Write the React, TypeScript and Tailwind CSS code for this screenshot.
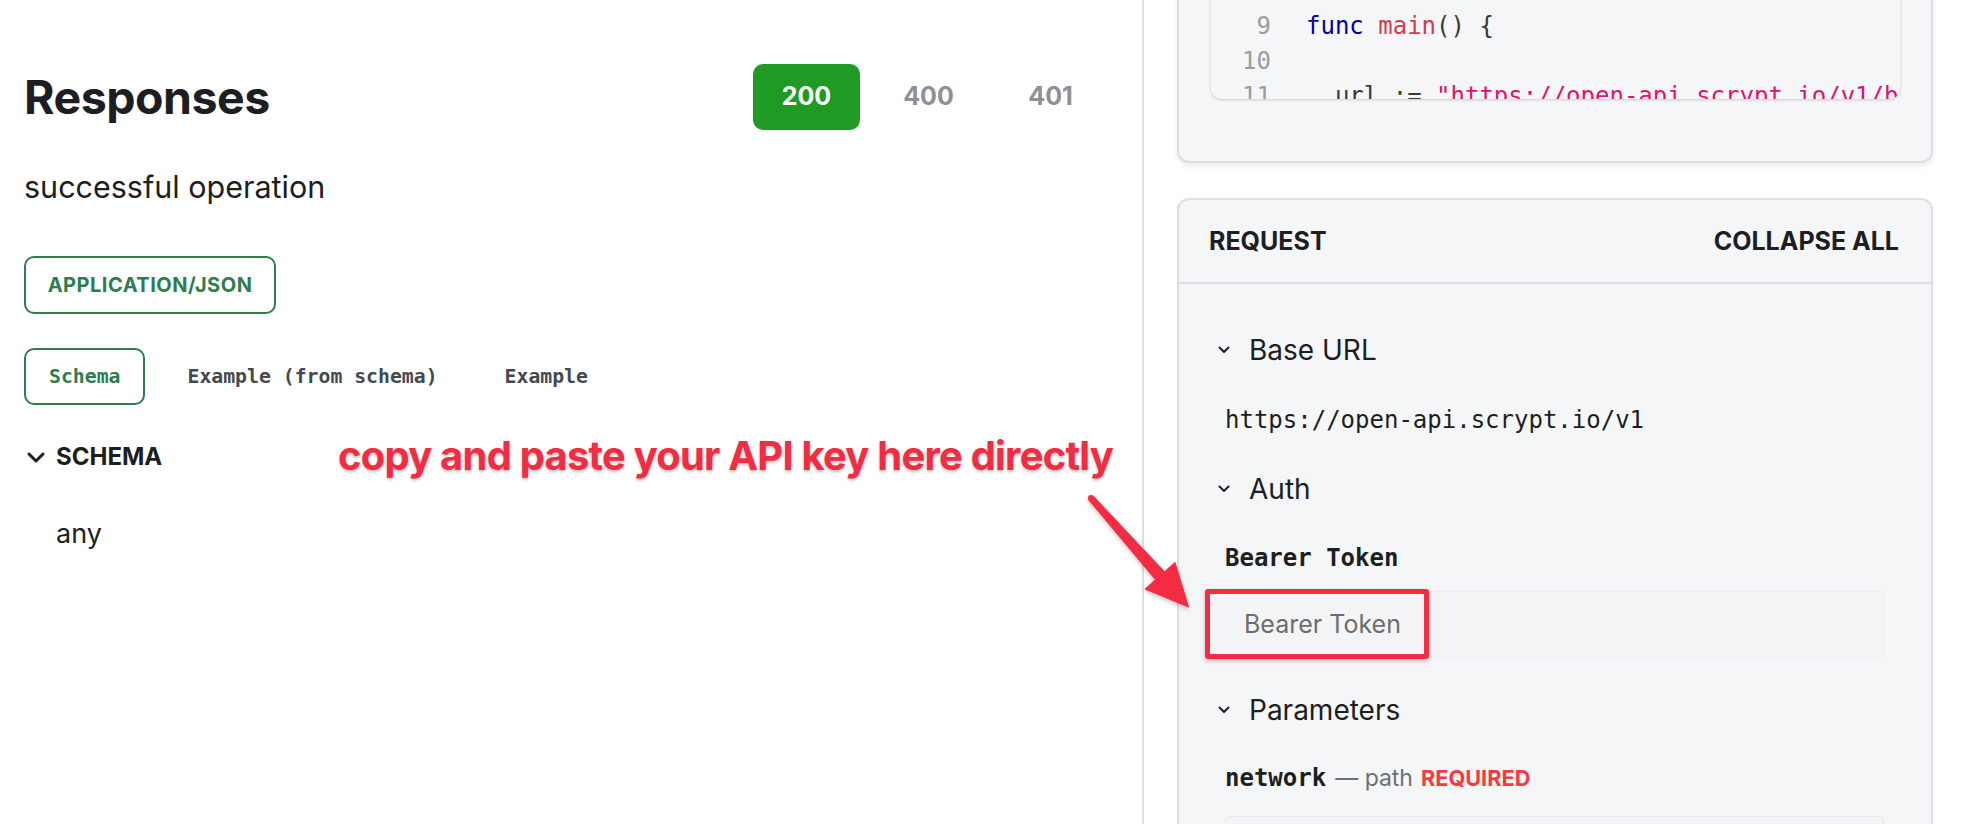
import React from "react";

function Chevron({ className }: { className?: string }) {
  return (
    <svg
      viewBox="0 0 12 8"
      className={className}
      fill="none"
      stroke="currentColor"
      strokeWidth={2}
      strokeLinecap="round"
      strokeLinejoin="round"
    >
      <polyline points="1.5,1.5 6,6 10.5,1.5" />
    </svg>
  );
}

const codeLines: { n: number; parts: [string, string][] }[] = [
  { n: 1, parts: [["#00009f", "package"], ["#393a34", " main"]] },
  { n: 2, parts: [] },
  { n: 3, parts: [["#00009f", "import"], ["#393a34", " ("]] },
  { n: 4, parts: [["#e3116c", '  "fmt"']] },
  { n: 5, parts: [["#e3116c", '  "net/http"']] },
  { n: 6, parts: [["#e3116c", '  "io/ioutil"']] },
  { n: 7, parts: [["#393a34", ")"]] },
  { n: 8, parts: [] },
  { n: 9, parts: [["#00009f", "func"], ["#393a34", " "], ["#d73a49", "main"], ["#393a34", "() {"]] },
  { n: 10, parts: [] },
  {
    n: 11,
    parts: [
      ["#393a34", "  url := "],
      ["#e3116c", '"https://open-api.scrypt.io/v1/bsv/main/address/:address/balance"'],
    ],
  },
  { n: 12, parts: [["#393a34", "  method := "], ["#e3116c", '"GET"']] },
];

function ResponseTabs() {
  const codes = ["200", "400", "401"];
  return (
    <div className="flex gap-[15px]">
      {codes.map((code, i) => (
        <div
          key={code}
          className={
            i === 0
              ? "flex h-[66px] w-[107px] items-center justify-center rounded-[10px] bg-[#1f9b25] text-[25px] font-bold text-white"
              : "flex h-[66px] w-[107px] items-center justify-center rounded-[10px] text-[25px] font-bold text-[#8d9096]"
          }
        >
          {code}
        </div>
      ))}
    </div>
  );
}

function SchemaTabs() {
  const tabs = ["Schema", "Example (from schema)", "Example"];
  return (
    <div className="mt-[34px] flex h-[57px] gap-[17px] [font-family:'DejaVu_Sans_Mono',monospace]">
      {tabs.map((t, i) => (
        <div
          key={t}
          className={
            i === 0
              ? "flex items-center rounded-[10px] border-2 border-[#2e7d4f] px-[23px] text-[19.8px] font-bold text-[#2e7d4f]"
              : "flex items-center rounded-[10px] border-2 border-transparent px-[23px] text-[19.8px] font-bold text-[#444950]"
          }
        >
          {t}
        </div>
      ))}
    </div>
  );
}

function Summary({ label }: { label: string }) {
  return (
    <div className="flex h-[40px] items-center pl-[13px] text-[28px] leading-[40px] text-[#1c1e21]">
      <Chevron className="h-[8px] w-[12px]" />
      <span className="ml-[19px]">{label}</span>
    </div>
  );
}

export default function App() {
  return (
    <div className="relative flex h-[824px] w-[1962px] overflow-hidden bg-white [font-family:Inter,'Noto_Sans',sans-serif] text-[#1c1e21]">
      {/* left: responses */}
      <div className="w-[1142px] shrink-0 pl-[24px] pr-[38px] pt-[64px]">
        <div className="flex h-[66px] items-center justify-between">
          <h2 className="text-[46.5px] font-bold leading-none tracking-[-0.5px]">Responses</h2>
          <ResponseTabs />
        </div>
        <p className="mt-[34px] text-[30.5px] leading-[46px]">successful operation</p>
        <div className="mt-[46px] flex h-[58px] w-[252px] items-center justify-center rounded-[10px] border-2 border-[#2e7d4f] text-[20px] font-bold tracking-[0.5px] text-[#2e7d4f]">
          APPLICATION/JSON
        </div>
        <SchemaTabs />
        <div className="mt-[34px] flex h-[36px] items-center">
          <svg viewBox="0 0 18 11" className="ml-[3px] h-[11px] w-[18px]" fill="none" stroke="#1c1e21" strokeWidth={3} strokeLinecap="round" strokeLinejoin="round">
            <polyline points="2,2 9,9 16,2" />
          </svg>
          <span className="ml-[11px] text-[24px] font-bold leading-[36px]">SCHEMA</span>
        </div>
        <div className="mt-[39px] pl-[32px] text-[27px] leading-[40px]">any</div>
      </div>

      {/* right: code + request panel */}
      <div className="flex w-[820px] min-w-0 shrink-0 flex-col border-l-2 border-[#dadde1] pl-[33px] pr-[29px]">
        <div className="-mt-[321px] rounded-[12px] border-2 border-[#dcdfe3] bg-[#f5f6f8] pb-[62px] pl-[32px] pr-[31px] pt-[32px] shadow-[0_3px_6px_rgba(0,0,0,0.08)]">
          <div className="h-[386px] overflow-hidden rounded-[10px] bg-[#f5f6f8] pt-[16px] shadow-[0_1px_3px_rgba(0,0,0,0.18)] [font-family:'DejaVu_Sans_Mono',monospace] text-[24px] leading-[35px]">
            {codeLines.map((l) => (
              <div key={l.n} className="flex h-[35px] whitespace-pre">
                <span className="w-[60px] shrink-0 text-right text-[#9c9d9a]">{l.n}</span>
                <span className="pl-[35px]">
                  {l.parts.map(([c, t], i) => (
                    <span key={i} style={{ color: c }}>
                      {t}
                    </span>
                  ))}
                </span>
              </div>
            ))}
          </div>
        </div>

        <div className="mt-[35px] h-[700px] rounded-t-[12px] border-2 border-b-0 border-[#dcdfe3] bg-[#f5f6f8]">
          <div className="flex items-center justify-between border-b-2 border-[#dcdfe3] py-[26px] pl-[30px] pr-[32px] text-[25px] font-bold leading-[30px]">
            <span>REQUEST</span>
            <span>COLLAPSE ALL</span>
          </div>
          <div className="pl-[26px] pr-[47px] pt-[46px]">
            <Summary label="Base URL" />
            <div className="mt-[32px] pl-[20px] [font-family:'DejaVu_Sans_Mono',monospace] text-[24px] leading-[36px]">
              https://open-api.scrypt.io/v1
            </div>
            <div className="mt-[31px]">
              <Summary label="Auth" />
            </div>
            <div className="mt-[31px] pl-[20px] [font-family:'DejaVu_Sans_Mono',monospace] text-[24px] font-bold leading-[36px]">
              Bearer Token
            </div>
            <div className="relative mt-[15px] flex h-[67px] items-center rounded-[4px] border border-[#eceef1] bg-[#f3f4f6] pl-[38px] text-[25px] text-[#6d6d6d]">
              Bearer Token
              <div className="absolute -left-px -top-[3px] h-[70px] w-[224px] rounded-[3px] border-[5px] border-[#f42c43] shadow-[0_2px_4px_rgba(0,0,0,0.25)]" />
            </div>
            <div className="mt-[32px]">
              <Summary label="Parameters" />
            </div>
            <div className="mt-[30px] flex items-baseline pl-[20px] leading-[36px]">
              <span className="[font-family:'DejaVu_Sans_Mono',monospace] text-[24px] font-bold">network</span>
              <span className="ml-[9px] text-[23px] text-[#6a6f77]">— path</span>
              <span className="ml-[8px] text-[21.7px] font-bold text-[#fa383e]">REQUIRED</span>
            </div>
            <div className="ml-[20px] mt-[20px] h-[60px] rounded-[4px] border border-[#e6e8eb] bg-[#f3f4f6]" />
          </div>
        </div>
      </div>

      {/* annotation overlay */}
      <div className="pointer-events-none absolute left-[338px] top-[436px] whitespace-nowrap text-[40px] font-bold leading-[40px] tracking-[-0.8px] text-[#f42c43] [text-shadow:0_2px_3px_rgba(0,0,0,0.25)]">
        copy and paste your API key here directly
      </div>
      <svg
        className="pointer-events-none absolute left-[1080px] top-[490px] h-[125px] w-[120px] [filter:drop-shadow(0_2px_2px_rgba(0,0,0,0.25))]"
        viewBox="0 0 120 125"
      >
        <polygon
          points="8.8,10 75.5,89.7 65,99 108.5,117 95,72.4 84.5,81.7 13.2,6"
          fill="#f42c43"
          stroke="#f42c43"
          strokeWidth={1}
          strokeLinejoin="round"
        />
        <circle cx="11" cy="8" r="3" fill="#f42c43" />
      </svg>
    </div>
  );
}
